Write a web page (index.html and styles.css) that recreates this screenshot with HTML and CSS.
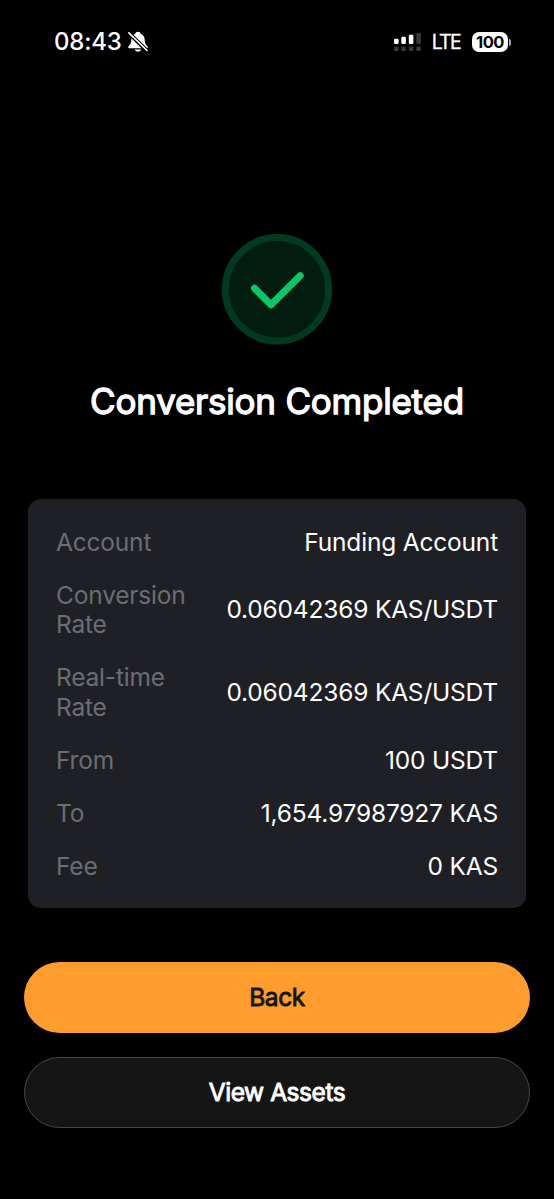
FILE: index.html
```html
<!DOCTYPE html>
<html lang="en">
<head>
<meta charset="utf-8">
<title>Conversion Completed</title>
<link rel="stylesheet" href="styles.css">
</head>
<body>
<div class="screen">
  <header class="status">
    <div class="status-left">
      <span class="clock">08:43</span>
      <svg class="bell" width="20" height="22" viewBox="0 0 20 22">
        <path fill="#fff" d="M10 .8c-1.500 0-2.500.8-2.800 2C4.600 3.900 3.400 6 3.300 9c-.1 3-.8 4.300-2.300 5.700-.6.600-.8 1-.8 1.500 0 .6.500 1 1.200 1h17.200c.7 0 1.200-.4 1.200-1 0-.5-.2-.9-.8-1.500-1.500-1.400-2.200-2.700-2.300-5.700-.1-3-1.300-5.100-3.900-6.200-.3-1.200-1.300-2-2.800-2zM6.800 18.400h6.400c-.4 1.400-1.600 2.200-3.200 2.200s-2.800-.8-3.200-2.200z"/>
        <path stroke="#000" stroke-width="4" d="M0 1.200 19.500 20.200"/>
        <path stroke="#fff" stroke-width="1.600" stroke-linecap="round" d="M.9 1.900 19 19.500"/>
      </svg>
    </div>
    <div class="status-right">
      <svg class="signal" width="29" height="20" viewBox="0 0 29 20">
        <g fill="#fff"><rect x="1" y="6.700" width="4.600" height="5.300" rx="1.200"/><rect x="8.300" y="4.800" width="4.600" height="7.200" rx="1.200"/><rect x="15.800" y="2.800" width="4.600" height="9.200" rx="1.200"/></g>
        <g fill="#39393b"><rect x="23.300" y="1" width="4.600" height="11" rx="1.200"/><rect x="1" y="14.600" width="4.600" height="4.400" rx="1.200"/><rect x="8.300" y="14.600" width="4.600" height="4.400" rx="1.200"/><rect x="15.800" y="14.600" width="4.600" height="4.400" rx="1.200"/><rect x="23.300" y="14.600" width="4.600" height="4.400" rx="1.200"/></g>
      </svg>
      <span class="network">LTE</span>
      <span class="battery">100</span>
      <span class="battery-tip"></span>
    </div>
  </header>

  <main class="content">
    <svg class="badge" width="112" height="112" viewBox="0 0 112 112">
      <circle cx="56" cy="56.300" r="51.700" fill="#021c10" stroke="#023a1f" stroke-width="7"/>
      <path d="M33.500 55.200 50 71.700 79.200 42.800" fill="none" stroke="#0cc768" stroke-width="7" stroke-linecap="round" stroke-linejoin="round"/>
    </svg>
    <h1 class="title">Conversion Completed</h1>

    <dl class="card">
      <div class="row"><dt>Account</dt><dd>Funding Account</dd></div>
      <div class="row"><dt>Conversion<br>Rate</dt><dd>0.06042369 KAS/USDT</dd></div>
      <div class="row"><dt>Real-time<br>Rate</dt><dd>0.06042369 KAS/USDT</dd></div>
      <div class="row"><dt>From</dt><dd>100 USDT</dd></div>
      <div class="row"><dt>To</dt><dd>1,654.97987927 KAS</dd></div>
      <div class="row"><dt>Fee</dt><dd>0 KAS</dd></div>
    </dl>

    <div class="actions">
      <button class="btn primary">Back</button>
      <button class="btn secondary">View Assets</button>
    </div>
  </main>
</div>
</body>
</html>
```
FILE: styles.css
```css
* { box-sizing: border-box; }
body {
  margin: 0;
  background: #000;
  color: #fff;
  font-family: Inter, "Liberation Sans", sans-serif;
}
.screen {
  width: 554px;
  height: 1199px;
  display: flex;
  flex-direction: column;
  overflow: hidden;
}
.status {
  height: 84px;
  padding: 0 43px 0 54px;
  display: flex;
  justify-content: space-between;
  align-items: center;
}
.status-left, .status-right { display: flex; align-items: center; }
.clock { font-size: 24px; font-weight: 500; line-height: 28px; letter-spacing: -0.200px; }
.bell { margin-left: 6px; }
.signal { margin-bottom: 1px; }
.network {
  margin-left: 10px;
  font-size: 19.500px;
  line-height: 24px;
  letter-spacing: -1.700px;
  -webkit-text-stroke: 0.300px currentColor;
}
.battery {
  margin-left: 12px;
  width: 36px;
  height: 20px;
  border-radius: 7px;
  background: #fff;
  color: #000;
  font-size: 16.500px;
  font-weight: 700;
  letter-spacing: -0.500px;
  line-height: 20px;
  text-align: center;
}
.battery-tip {
  margin-left: 1px;
  width: 2px;
  height: 7px;
  border-radius: 0 2px 2px 0;
  background: #aaa;
}
.content {
  display: flex;
  flex-direction: column;
  align-items: center;
  padding-top: 149px;
}
.title {
  margin: 34px 0 0;
  font-size: 35px;
  font-weight: 400;
  letter-spacing: -0.220px;
  -webkit-text-stroke: 1.300px currentColor;
  line-height: 44px;
  white-space: nowrap;
}
.card {
  width: 498px;
  height: 409px;
  margin: 76px 0 0;
  padding: 28.5px 28px 0;
  border-radius: 13px;
  background: #1f2026;
  display: flex;
  flex-direction: column;
  gap: 23.5px;
}
.row {
  display: flex;
  justify-content: space-between;
  align-items: center;
  font-size: 24.500px;
  letter-spacing: -0.190px;
  line-height: 29.500px;
  white-space: nowrap;
}
dt { color: #6c6d72; }
dd { margin: 0; }
.actions {
  width: 506px;
  margin-top: 54px;
  display: flex;
  flex-direction: column;
  gap: 24px;
}
.btn {
  height: 71px;
  border: 0;
  border-radius: 36px;
  padding: 0 0 2px;
  font-family: inherit;
  font-size: 24.500px;
  font-weight: 400;
  letter-spacing: -0.450px;
  -webkit-text-stroke: 0.900px currentColor;
}
.primary { background: #ff9c2e; color: #161616; }
.secondary { background: #151515; color: #fff; border: 1.500px solid #47474a; }
```
